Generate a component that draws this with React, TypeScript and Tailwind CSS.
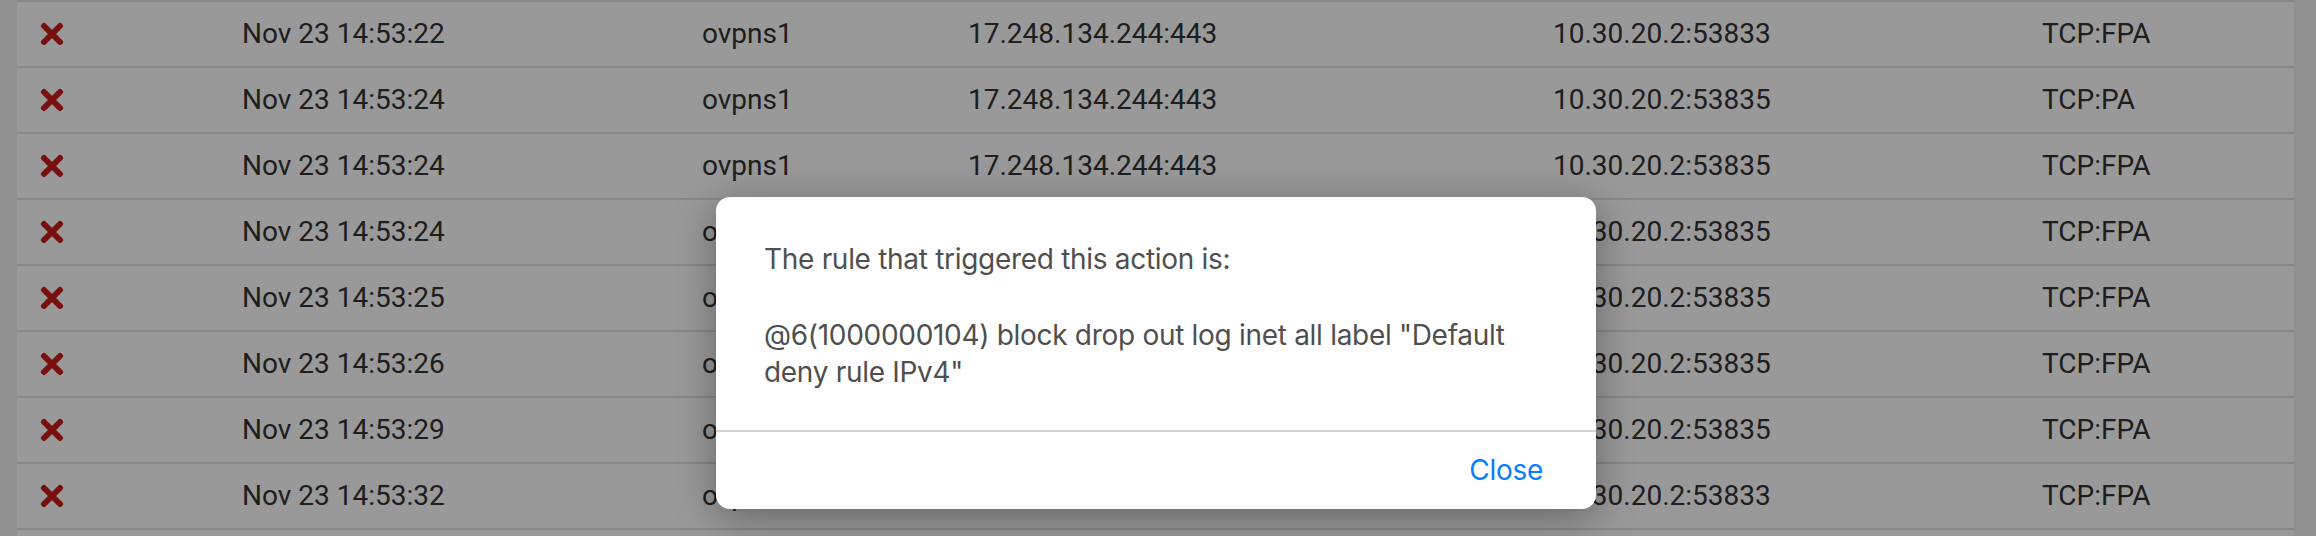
import React from "react";

type Row = { time: string; iface: string; src: string; dst: string; proto: string };

const rows: Row[] = [
  { time: "Nov 23 14:53:22", iface: "ovpns1", src: "17.248.134.244:443", dst: "10.30.20.2:53833", proto: "TCP:FPA" },
  { time: "Nov 23 14:53:24", iface: "ovpns1", src: "17.248.134.244:443", dst: "10.30.20.2:53835", proto: "TCP:PA" },
  { time: "Nov 23 14:53:24", iface: "ovpns1", src: "17.248.134.244:443", dst: "10.30.20.2:53835", proto: "TCP:FPA" },
  { time: "Nov 23 14:53:24", iface: "ovpns1", src: "17.248.134.244:443", dst: "10.30.20.2:53835", proto: "TCP:FPA" },
  { time: "Nov 23 14:53:25", iface: "ovpns1", src: "17.248.134.244:443", dst: "10.30.20.2:53835", proto: "TCP:FPA" },
  { time: "Nov 23 14:53:26", iface: "ovpns1", src: "17.248.134.244:443", dst: "10.30.20.2:53835", proto: "TCP:FPA" },
  { time: "Nov 23 14:53:29", iface: "ovpns1", src: "17.248.134.244:443", dst: "10.30.20.2:53835", proto: "TCP:FPA" },
  { time: "Nov 23 14:53:32", iface: "ovpns1", src: "17.248.134.244:443", dst: "10.30.20.2:53833", proto: "TCP:FPA" },
  { time: "Nov 23 14:53:33", iface: "ovpns1", src: "17.248.134.244:443", dst: "10.30.20.2:53833", proto: "TCP:FPA" },
];

const BlockIcon = () => (
  <svg width="24" height="24" viewBox="0 0 24 24" className="block">
    <path d="M4 4 L20 20 M20 4 L4 20" stroke="#c81c1c" strokeWidth="6" strokeLinecap="round" />
  </svg>
);

export default function App() {
  return (
    <div className="relative h-[536px] w-[2316px] overflow-hidden bg-[#f1f1f1] font-['Roboto',sans-serif] text-[28px] text-[#333]">
      <div className="ml-[17px] w-[2277px] bg-white border-t-2 border-[#e2e2e2]">
        {rows.map((r, i) => (
          <div
            key={i}
            className="grid h-[66px] grid-cols-[202px_460px_266px_585px_489px_275px] items-center whitespace-nowrap border-b-2 border-[#e2e2e2]"
          >
            <div className="px-[23px]">
              <BlockIcon />
            </div>
            <div className="px-[23px]">{r.time}</div>
            <div className="px-[23px]">{r.iface}</div>
            <div className="px-[23px]">{r.src}</div>
            <div className="px-[23px]">{r.dst}</div>
            <div className="px-[23px]">{r.proto}</div>
          </div>
        ))}
      </div>

      {/* modal backdrop */}
      <div className="absolute inset-0 flex justify-center bg-black/40 pt-[197px]">
        <div className="h-[312px] w-[880px] -translate-x-[2px] overflow-hidden rounded-[14px] bg-white shadow-[0_8px_40px_rgba(0,0,0,0.35)] font-['Inter',sans-serif] text-[#4f4f4f]">
          <div className="px-[48px] pt-[44px] pb-[39px] text-[28px] leading-[37px] tracking-[-0.3px]">
            <p>The rule that triggered this action is:</p>
            <p className="mt-[39px]">
              @6(1000000104) block drop out log inet all label "Default deny rule IPv4"
            </p>
          </div>
          <div className="flex h-[78px] items-center justify-end border-t-2 border-[#d4d4d4] pr-[53px]">
            <button type="button" className="text-[28px] tracking-[-0.3px] text-[#0a7cff]">
              Close
            </button>
          </div>
        </div>
      </div>
    </div>
  );
}
